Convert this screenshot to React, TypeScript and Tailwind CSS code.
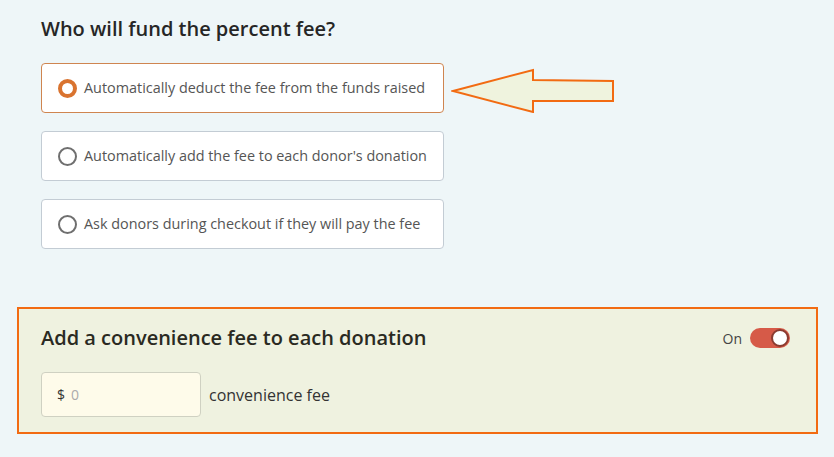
import { useState } from 'react'

const options = [
  'Automatically deduct the fee from the funds raised',
  "Automatically add the fee to each donor's donation",
  'Ask donors during checkout if they will pay the fee',
]

function Radio({ checked }: { checked: boolean }) {
  return checked ? (
    <span className="box-border block h-[19px] w-[19px] shrink-0 rounded-full border-[4.5px] border-[#d9732f] bg-white" />
  ) : (
    <span className="box-border block h-[19px] w-[19px] shrink-0 rounded-full border-2 border-[#6f6f6f] bg-white" />
  )
}

export default function App() {
  const [selected, setSelected] = useState(0)
  const [on, setOn] = useState(true)

  return (
    <div className="h-[457px] w-[834px] overflow-hidden bg-[#eef6f8] font-['Open_Sans',sans-serif]">
      <div className="px-[41px] pt-[15px]">
        <h2 className="text-[20px] leading-[28px] font-semibold text-[#262626]">Who will fund the percent fee?</h2>

        <div className="relative mt-[20px] flex flex-col gap-[18px]">
          {options.map((label, i) => (
            <button
              key={label}
              onClick={() => setSelected(i)}
              className={`flex h-[50px] w-[403px] items-center gap-[7px] rounded-[4px] border bg-white px-[16px] text-left text-[14.4px] text-[#555] ${
                selected === i ? 'border-[#cf8550]' : 'border-[#c3ccd4]'
              }`}
            >
              <Radio checked={selected === i} />
              <span>{label}</span>
            </button>
          ))}

          {/* callout arrow */}
          <svg className="absolute top-[4px] left-[410px]" width="166" height="46" viewBox="0 0 166 46">
            <polygon
              points="2,24 82,3 82,13 162,14 162,34 82,34 82,45"
              fill="#eff3de"
              stroke="#f26b12"
              strokeWidth="2"
              strokeLinejoin="miter"
            />
          </svg>
        </div>
      </div>

      <div className="mx-[17px] mt-[58px] h-[127px] w-[801px] border-2 border-[#f26b12] bg-[#eff2e0] px-[22px] pt-[15px]">
        <div className="flex items-center justify-between">
          <h3 className="text-[20px] leading-[28px] font-semibold text-[#2a2a22]">Add a convenience fee to each donation</h3>
          <div className="mr-[4px] flex items-center gap-[8px]">
            <span className="text-[14px] text-[#444]">On</span>
            <button
              onClick={() => setOn(!on)}
              className={`relative h-[20px] w-[40px] rounded-full ${on ? 'bg-[#d65a48]' : 'bg-[#bbb]'}`}
            >
              <span
                className={`absolute top-[1px] box-border h-[18px] w-[18px] rounded-full border-2 border-[#8a3b30] bg-white ${
                  on ? 'left-[21px]' : 'left-[1px]'
                }`}
              />
            </button>
          </div>
        </div>

        <div className="mt-[20px] flex items-center gap-[8px]">
          <div className="flex h-[45px] w-[160px] items-center rounded-[4px] border border-[#cfd1c2] bg-[#fefbea] px-[15px] text-[14px]">
            <span className="text-[#333]">$</span>
            <span className="ml-[6px] text-[#aaa]">0</span>
          </div>
          <span className="text-[16px] text-[#333]">convenience fee</span>
        </div>
      </div>
    </div>
  )
}
